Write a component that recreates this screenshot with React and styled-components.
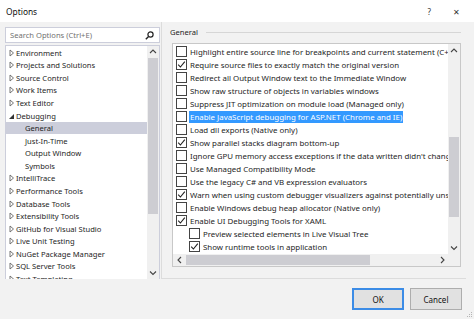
import React from "react";
import styled, { createGlobalStyle } from "styled-components";

const GlobalStyle = createGlobalStyle`
  html, body {
    margin: 0;
    padding: 0;
  }
  body {
    width: 474px;
    height: 319px;
    overflow: hidden;
    background: #f2f2f2;
    font-family: "Noto Sans", "Liberation Sans", sans-serif;
    color: #1e1e1e;
  }
`;

const treeItems = [
  { label: "Environment", level: 0, state: "closed" },
  { label: "Projects and Solutions", level: 0, state: "closed" },
  { label: "Source Control", level: 0, state: "closed" },
  { label: "Work Items", level: 0, state: "closed" },
  { label: "Text Editor", level: 0, state: "closed" },
  { label: "Debugging", level: 0, state: "open" },
  { label: "General", level: 1, selected: true },
  { label: "Just-In-Time", level: 1 },
  { label: "Output Window", level: 1 },
  { label: "Symbols", level: 1 },
  { label: "IntelliTrace", level: 0, state: "closed" },
  { label: "Performance Tools", level: 0, state: "closed" },
  { label: "Database Tools", level: 0, state: "closed" },
  { label: "Extensibility Tools", level: 0, state: "closed" },
  { label: "GitHub for Visual Studio", level: 0, state: "closed" },
  { label: "Live Unit Testing", level: 0, state: "closed" },
  { label: "NuGet Package Manager", level: 0, state: "closed" },
  { label: "SQL Server Tools", level: 0, state: "closed" },
  { label: "Text Templating", level: 0, state: "closed" },
];

const options = [
  { label: "Highlight entire source line for breakpoints and current statement (C++ only)" },
  { label: "Require source files to exactly match the original version", checked: true },
  { label: "Redirect all Output Window text to the Immediate Window" },
  { label: "Show raw structure of objects in variables windows" },
  { label: "Suppress JIT optimization on module load (Managed only)" },
  { label: "Enable JavaScript debugging for ASP.NET (Chrome and IE)", selected: true },
  { label: "Load dll exports (Native only)" },
  { label: "Show parallel stacks diagram bottom-up", checked: true },
  { label: "Ignore GPU memory access exceptions if the data written didn't change the value" },
  { label: "Use Managed Compatibility Mode" },
  { label: "Use the legacy C# and VB expression evaluators" },
  { label: "Warn when using custom debugger visualizers against potentially unsafe processes (Managed only)", checked: true },
  { label: "Enable Windows debug heap allocator (Native only)" },
  { label: "Enable UI Debugging Tools for XAML", checked: true },
  { label: "Preview selected elements in Live Visual Tree", level: 1 },
  { label: "Show runtime tools in application", level: 1, checked: true },
  { label: "Enable Edit and Continue", level: 1 },
];

// Small drawn glyphs
const Chevron = ({ dir }) => {
  const pts = {
    up: "1,5 4,2 7,5",
    down: "1,2.5 4,5.5 7,2.5",
    left: "5,1 2,4 5,7",
    right: "3,1 6,4 3,7",
  }[dir];
  return (
    <svg width="8" height="8" viewBox="0 0 8 8">
      <polyline points={pts} fill="none" stroke="#444" strokeWidth="1.1" />
    </svg>
  );
};

const Expander = ({ state }) => (
  <ExpanderBox>
    {state === "open" ? (
      <svg width="6" height="8" viewBox="0 0 6 8">
        <polygon points="5,2 5,7 0,7" fill="#333" />
      </svg>
    ) : state === "closed" ? (
      <svg width="6" height="8" viewBox="0 0 6 8">
        <polygon points="1,1 4.5,4 1,7" fill="none" stroke="#666" strokeWidth="0.9" />
      </svg>
    ) : null}
  </ExpanderBox>
);

const Check = () => (
  <svg width="9" height="9" viewBox="0 0 9 9">
    <polyline points="1.2,4.6 3.4,7 7.8,1.6" fill="none" stroke="#222" strokeWidth="1.1" />
  </svg>
);

function VScroll({ thumbStart, thumbSize, arrow }) {
  return (
    <VBar>
      <ArrowCell $h={arrow}>
        <Chevron dir="up" />
      </ArrowCell>
      <VTrack>
        <VThumb $start={thumbStart} $size={thumbSize} />
      </VTrack>
      <ArrowCell $h={arrow}>
        <Chevron dir="down" />
      </ArrowCell>
    </VBar>
  );
}

export default function App() {
  return (
    <>
      <GlobalStyle />
      <Window>
        <TitleBar>
          <span>Options</span>
          <TitleButtons>
            <span>?</span>
            <span>✕</span>
          </TitleButtons>
        </TitleBar>

        <Body>
          <LeftPane>
            <SearchBox>
              <span>Search Options (Ctrl+E)</span>
              <svg width="9" height="9" viewBox="0 0 9 9">
                <circle cx="5.5" cy="3.5" r="2.6" fill="none" stroke="#222" strokeWidth="1.2" />
                <line x1="3.6" y1="5.4" x2="0.8" y2="8.2" stroke="#222" strokeWidth="1.4" />
              </svg>
            </SearchBox>
            <TreeBox>
              <TreeList>
                {treeItems.map((item) => (
                  <TreeRow key={item.label} $level={item.level} $selected={item.selected}>
                    {item.level === 0 && <Expander state={item.state} />}
                    {item.label}
                  </TreeRow>
                ))}
              </TreeList>
              <VScroll thumbStart={0} thumbSize={156} arrow={12} />
            </TreeBox>
          </LeftPane>

          <RightPane>
            <GroupHeader>
              <span>General</span>
              <HeaderRule />
            </GroupHeader>
            <CheckListBox>
              <CheckList>
                {options.map((opt) => (
                  <OptionRow key={opt.label} $level={opt.level || 0}>
                    <CheckBox>{opt.checked && <Check />}</CheckBox>
                    <OptionText $selected={opt.selected}>{opt.label}</OptionText>
                  </OptionRow>
                ))}
              </CheckList>
              <VScroll thumbStart={80} thumbSize={80} arrow={13} />
              <HBar>
                <ArrowCell $w={13}>
                  <Chevron dir="left" />
                </ArrowCell>
                <HTrack>
                  <HThumb $size={184} />
                </HTrack>
                <ArrowCell $w={13}>
                  <Chevron dir="right" />
                </ArrowCell>
              </HBar>
              <Corner />
            </CheckListBox>
          </RightPane>
        </Body>

        <Footer>
          <Button $primary>OK</Button>
          <Button>Cancel</Button>
        </Footer>
        <Grip>
          <svg width="8" height="8" viewBox="0 0 8 8">
            <g fill="#b5b5b5">
              <rect x="6" y="2" width="1" height="1" />
              <rect x="4" y="4" width="1" height="1" />
              <rect x="6" y="4" width="1" height="1" />
              <rect x="2" y="6" width="1" height="1" />
              <rect x="4" y="6" width="1" height="1" />
              <rect x="6" y="6" width="1" height="1" />
            </g>
          </svg>
        </Grip>
      </Window>
    </>
  );
}

const Window = styled.div`
  position: relative;
  width: 474px;
  height: 319px;
  display: flex;
  flex-direction: column;
  background: #f2f2f2;
  font-size: 7.6px;
`;

const TitleBar = styled.div`
  height: 22px;
  flex-shrink: 0;
  display: flex;
  align-items: center;
  justify-content: space-between;
  padding: 0 0 0 6px;
  background: #ffffff;
  font-size: 8.4px;
  color: #111;
`;

const TitleButtons = styled.div`
  display: flex;
  gap: 22px;
  padding-right: 14px;
  font-size: 8px;
  color: #333;
`;

const Body = styled.div`
  height: 257px;
  display: flex;
`;

const LeftPane = styled.div`
  width: 161px;
  flex-shrink: 0;
  box-sizing: border-box;
  padding: 5px 1px 0 5px;
  display: flex;
  flex-direction: column;
  gap: 2px;
`;

const SearchBox = styled.div`
  height: 16px;
  flex-shrink: 0;
  box-sizing: border-box;
  border: 1px solid #cccedb;
  background: #fff;
  display: flex;
  align-items: center;
  justify-content: space-between;
  padding: 0 5px 0 4px;
  color: #717171;
`;

const TreeBox = styled.div`
  flex: 1;
  min-height: 0;
  border: 1px solid #cccedb;
  border-bottom: none;
  background: #fff;
  display: flex;
  overflow: hidden;
`;

const TreeList = styled.div`
  flex: 1;
  padding-top: 0.5px;
  overflow: hidden;
`;

const TreeRow = styled.div`
  height: 12.57px;
  display: flex;
  align-items: center;
  white-space: nowrap;
  padding-left: ${(p) => (p.$level ? 19 : 3)}px;
  background: ${(p) => (p.$selected ? "#cccedb" : "transparent")};
`;

const ExpanderBox = styled.span`
  width: 7px;
  display: flex;
  align-items: center;
`;

const VBar = styled.div`
  width: 12px;
  flex-shrink: 0;
  display: flex;
  flex-direction: column;
  background: #f0f0f0;
`;

const ArrowCell = styled.div`
  ${(p) => (p.$h ? `height: ${p.$h}px;` : "")}
  ${(p) => (p.$w ? `width: ${p.$w}px;` : "")}
  flex-shrink: 0;
  display: flex;
  align-items: center;
  justify-content: center;
`;

const VTrack = styled.div`
  flex: 1;
  display: flex;
  flex-direction: column;
`;

const VThumb = styled.div`
  margin: ${(p) => p.$start}px 1px 0;
  height: ${(p) => p.$size}px;
  background: #cdcdd2;
`;

const RightPane = styled.div`
  flex: 1;
  margin-right: 8px;
  border-left: 1px solid #dcdcdc;
  border-bottom: 1px solid #dcdcdc;
  padding: 4px 5px 0 8px;
  display: flex;
  flex-direction: column;
`;

const GroupHeader = styled.div`
  height: 12px;
  display: flex;
  align-items: center;
  gap: 8px;
  color: #1e1e1e;
`;

const HeaderRule = styled.div`
  flex: 1;
  height: 1px;
  background: #d6d6d6;
`;

const CheckListBox = styled.div`
  margin: 5px 0 0 2px;
  height: 224px;
  box-sizing: border-box;
  border: 1px solid #c8c8c8;
  background: #fff;
  display: grid;
  grid-template-columns: 1fr 12px;
  grid-template-rows: 1fr 12px;
  overflow: hidden;
`;

const CheckList = styled.div`
  padding-top: 1px;
  overflow: hidden;
`;

const OptionRow = styled.div`
  height: 13px;
  display: flex;
  align-items: center;
  gap: 2px;
  padding-left: ${(p) => 3 + p.$level * 13}px;
  white-space: nowrap;
  font-size: 7.9px;
`;

const CheckBox = styled.span`
  width: 11px;
  height: 11px;
  flex-shrink: 0;
  box-sizing: border-box;
  border: 1px solid #444;
  background: #fff;
  display: flex;
  align-items: center;
  justify-content: center;
`;

const OptionText = styled.span`
  line-height: 12px;
  padding: 0 1px;
  background: ${(p) => (p.$selected ? "#3399ff" : "transparent")};
  color: ${(p) => (p.$selected ? "#fff" : "#1e1e1e")};
`;

const HBar = styled.div`
  display: flex;
  background: #f0f0f0;
`;

const HTrack = styled.div`
  flex: 1;
  display: flex;
  align-items: stretch;
  padding: 1px 0;
`;

const HThumb = styled.div`
  width: ${(p) => p.$size}px;
  background: #cdcdd2;
`;

const Corner = styled.div`
  background: #f0f0f0;
`;

const Footer = styled.div`
  flex: 1;
  display: flex;
  justify-content: flex-end;
  align-items: flex-start;
  gap: 6px;
  padding: 9px 12px 0 0;
`;

const Button = styled.button`
  width: 52px;
  height: 22px;
  box-sizing: border-box;
  border: 1px solid ${(p) => (p.$primary ? "#3c8ce6" : "#adadad")};
  box-shadow: ${(p) => (p.$primary ? "inset 0 0 0 1px #3c8ce6" : "none")};
  background: #e1e1e1;
  font-family: inherit;
  font-size: 8px;
  color: #111;
  padding: 0;
`;

const Grip = styled.div`
  position: absolute;
  right: 1px;
  bottom: 1px;
  line-height: 0;
`;
